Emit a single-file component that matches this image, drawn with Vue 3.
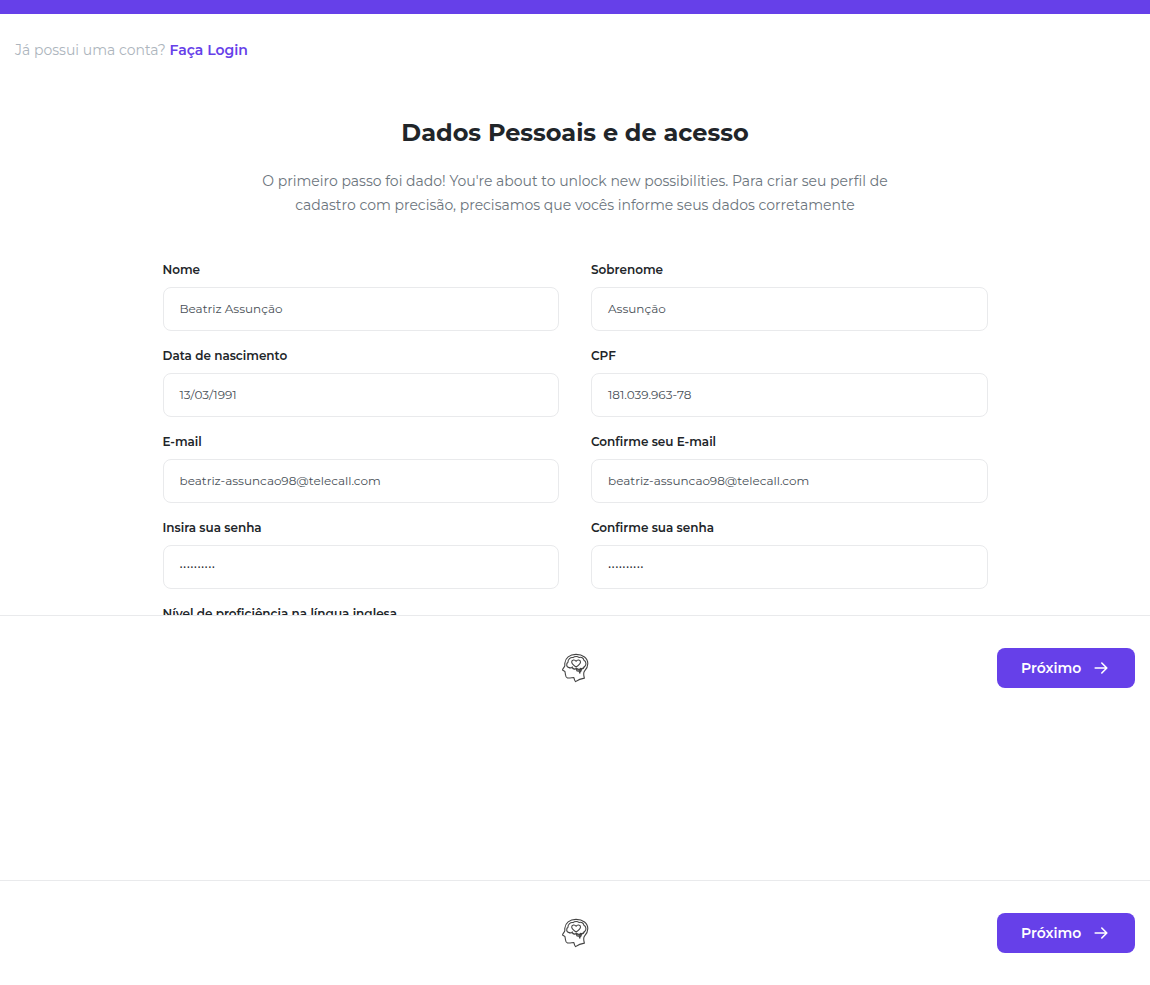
<script setup>
const rows = [
  [
    { label: 'Nome', value: 'Beatriz Assunção' },
    { label: 'Sobrenome', value: 'Assunção' },
  ],
  [
    { label: 'Data de nascimento', value: '13/03/1991' },
    { label: 'CPF', value: '181.039.963-78' },
  ],
  [
    { label: 'E-mail', value: 'beatriz-assuncao98@telecall.com' },
    { label: 'Confirme seu E-mail', value: 'beatriz-assuncao98@telecall.com' },
  ],
  [
    { label: 'Insira sua senha', value: '··········', secret: true },
    { label: 'Confirme sua senha', value: '··········', secret: true },
  ],
  [{ label: 'Nível de proficiência na língua inglesa', value: '' }],
]
</script>

<template>
  <div class="page">
    <main class="content">
      <div class="progress"></div>
      <p class="login">Já possui uma conta? <a class="link">Faça Login</a></p>
      <h1>Dados Pessoais e de acesso</h1>
      <p class="intro">
        O primeiro passo foi dado! You're about to unlock new possibilities. Para criar seu perfil de<br />
        cadastro com precisão, precisamos que vocês informe seus dados corretamente
      </p>
      <form class="form">
        <div v-for="(row, r) in rows" :key="r" class="row">
          <div v-for="field in row" :key="field.label" class="field">
            <label>{{ field.label }}</label>
            <div class="input" :class="{ secret: field.secret }">{{ field.value }}</div>
          </div>
        </div>
      </form>
    </main>

    <footer v-for="n in 2" :key="n" class="footer">
      <div class="side"></div>
      <svg class="logo" viewBox="0 0 30 30" width="30" height="30" fill="none" stroke="#444" stroke-linecap="round" stroke-linejoin="round">
        <path stroke-width="1.1" d="M4.8 10.2C5.2 5 9.6 1.4 16 1.4c7 0 11.8 3.8 11.8 9.3 0 3.4-1.4 5.5-3.3 7.5-1.1 1.4-.8 4.5-.1 6.9-3 .4-6.3 1.6-8.9 3.5-.9-.9-1.3-2.5-1.6-4-2.2.1-4.5.7-6.5.3-2-.5-1.8-2.4-2.1-4.4l-.4-2.1-2.4-1.3c.2-1.5 2.2-3.3 2.3-4.4z" />
        <path stroke-width="1.1" d="M9.4 14.6C5.9 14.6 6.2 10.2 8 9.3 7.6 6.3 10.8 3.9 13 4.6c1.7-1.5 4.8-1.4 6-.1 2.3-.8 4.7.3 4.9 2.8 2.3 1.2 2.8 4.5.8 6.3" />
        <path stroke-width="1.1" d="M16.1 14c-2.6-1.7-4.4-3.2-4.4-5 0-2.3 3.2-2.7 4.4-.7 1.2-2 4.4-1.6 4.4.7 0 1.8-1.8 3.3-4.4 5z" />
        <path stroke-width="1.3" d="M9.4 14.6c1 .6 2.3.4 2.9-.6M12.3 14.6c1 1.6 2.9 1.9 4 .8M16.3 15.5l.7 2.3 2.2.3.6 2M17.2 15.8c1.1.9 2.8.7 3.5-.4M20.8 15.6c1.3.4 3-.4 3.6-2.1M21.5 16.5l-1 2.2M19 16.8l1.2.2" />
      </svg>
      <div class="side end">
        <button type="button">
          <span>Próximo</span>
          <svg width="16" height="16" viewBox="0 0 16 16" fill="none" stroke="#fff" stroke-width="1.6" stroke-linecap="round" stroke-linejoin="round">
            <path d="M2.2 8h11.5M8.8 3L13.8 8l-5 5" />
          </svg>
        </button>
      </div>
    </footer>
  </div>
</template>

<style>
body {
  margin: 0;
  background: #fff;
}
</style>

<style scoped>
.page {
  height: 985px;
  display: flex;
  flex-direction: column;
  overflow: hidden;
  font-family: Montserrat, Inter, "Open Sans", sans-serif;
  color: #212529;
}
.content {
  height: 615px;
  flex: none;
  overflow: hidden;
}
.progress {
  height: 14px;
  background: #6640e9;
}
.login {
  margin: 24px 0 0 15px;
  font-size: 14px;
  line-height: 24px;
  color: #adb5bd;
}
.link {
  color: #6640e9;
  font-weight: 600;
}
h1 {
  margin: 55px 0 0;
  text-align: center;
  font-size: 24px;
  line-height: 32px;
  font-weight: 700;
}
.intro {
  margin: 20px 0 0;
  text-align: center;
  font-size: 14px;
  line-height: 24px;
  font-weight: 400;
  color: #6c757d;
}
.form {
  width: 825px;
  margin: 44px auto 0;
}
.row {
  display: grid;
  grid-template-columns: 1fr 1fr;
  gap: 32px;
  margin-bottom: 16px;
}
label {
  display: block;
  height: 18px;
  margin-bottom: 8px;
  font-size: 12px;
  line-height: 18px;
  font-weight: 600;
}
.input {
  box-sizing: border-box;
  height: 44px;
  padding: 0 16px;
  border: 1px solid #e9eaec;
  border-radius: 8px;
  font-size: 12px;
  line-height: 42px;
  font-weight: 400;
  color: #495057;
}
.secret {
  font-weight: 500;
  letter-spacing: 0.38px;
  color: #212529;
}
.footer {
  box-sizing: border-box;
  flex: none;
  height: 105px;
  padding: 0 15px;
  display: flex;
  align-items: center;
  border-top: 1px solid #e9eaec;
}
.footer + .footer {
  margin-top: 160px;
}
.side {
  flex: 1;
  display: flex;
}
.end {
  justify-content: flex-end;
}
button {
  width: 138px;
  height: 40px;
  padding: 0 0 0 24px;
  display: flex;
  align-items: center;
  gap: 12px;
  border: 0;
  border-radius: 8px;
  background: #6640e9;
  color: #fff;
  font-family: inherit;
  font-size: 14px;
  font-weight: 600;
}
</style>
